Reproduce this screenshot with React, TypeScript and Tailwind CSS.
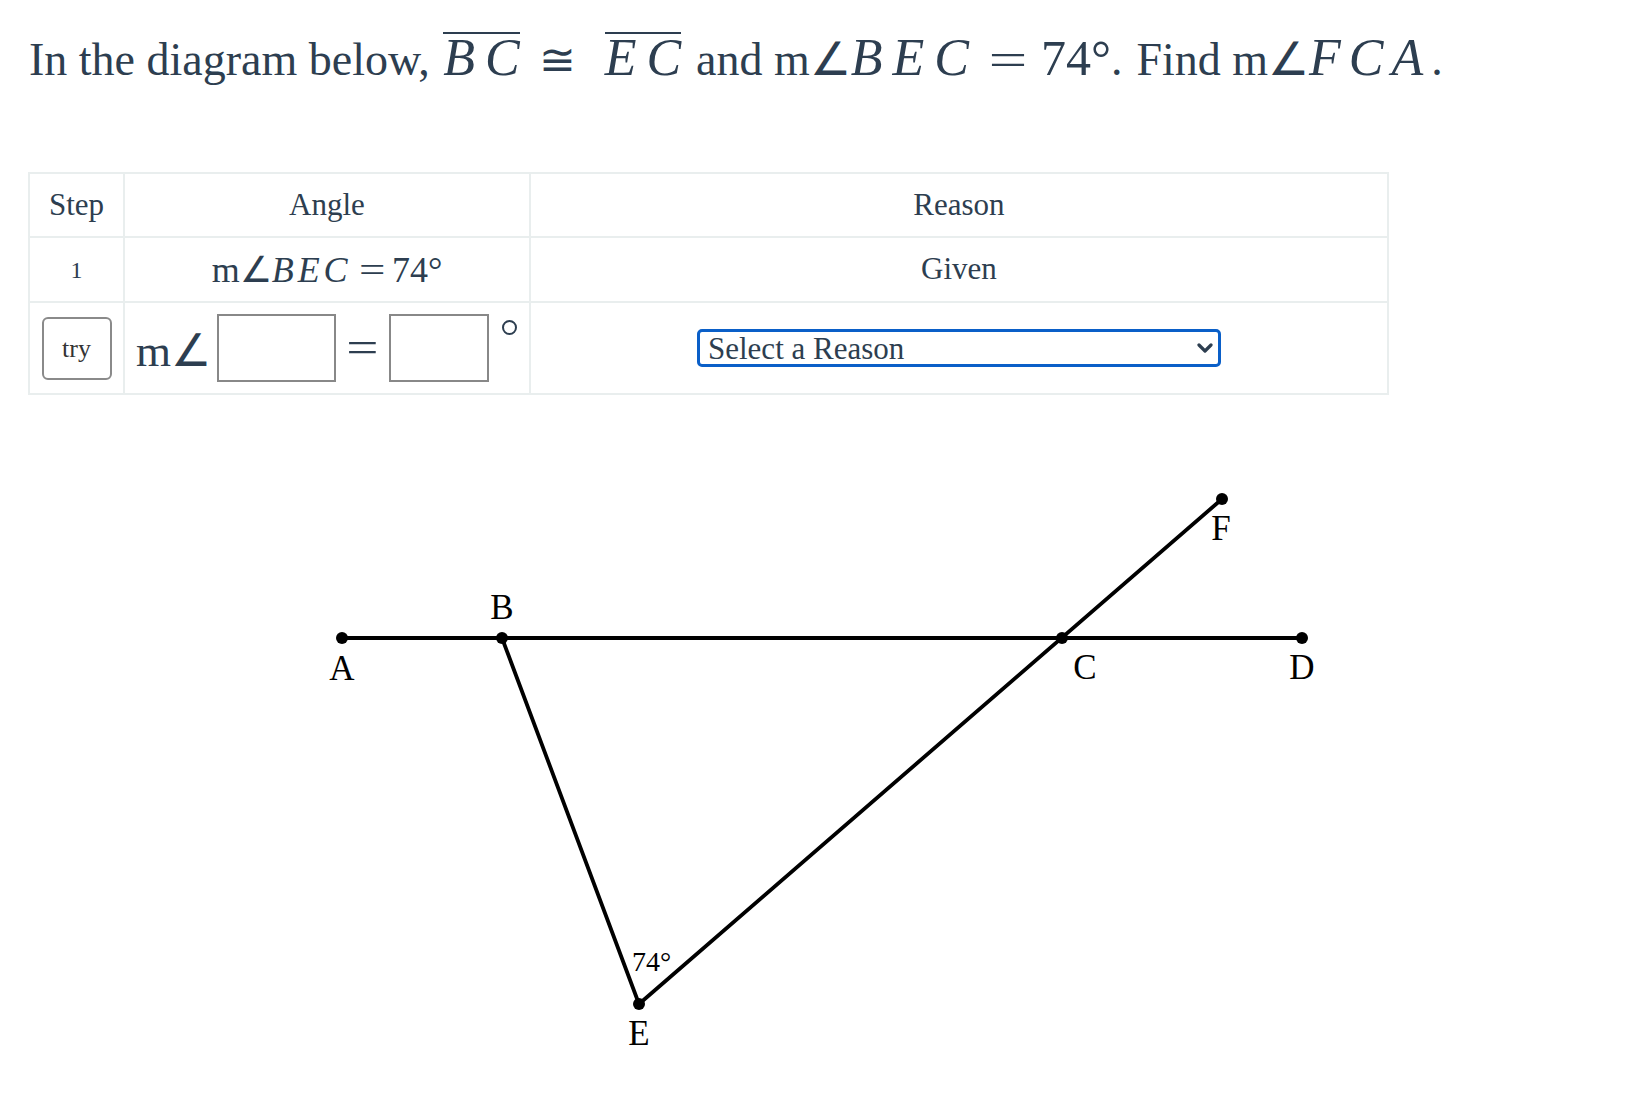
import React from 'react';

const ink = 'text-[#2d3e50]';

// points of the figure, in page pixels
const pts = {
  A: { x: 342, y: 638 },
  B: { x: 502, y: 638 },
  C: { x: 1062, y: 638 },
  D: { x: 1302, y: 638 },
  E: { x: 639, y: 1004 },
  F: { x: 1222, y: 499 },
};

const labels = [
  { t: 'A', x: 342, y: 680 },
  { t: 'B', x: 502, y: 619 },
  { t: 'C', x: 1085, y: 679 },
  { t: 'D', x: 1302, y: 679 },
  { t: 'E', x: 639, y: 1045 },
  { t: 'F', x: 1221, y: 540 },
];

const Diagram: React.FC = () => (
  <svg width={1634} height={700} viewBox="0 400 1634 700" className="block mt-[5px]">
    <g stroke="#000" strokeWidth={3.8} strokeLinecap="round">
      <line x1={pts.A.x} y1={pts.A.y} x2={pts.D.x} y2={pts.D.y} />
      <line x1={pts.B.x} y1={pts.B.y} x2={pts.E.x} y2={pts.E.y} />
      <line x1={pts.E.x} y1={pts.E.y} x2={pts.F.x} y2={pts.F.y} />
    </g>
    {Object.values(pts).map((p, i) => (
      <circle key={i} cx={p.x} cy={p.y} r={6} fill="#000" />
    ))}
    <g fontFamily="'Liberation Serif', serif" fontSize={35} fill="#000" textAnchor="middle">
      {labels.map((l) => (
        <text key={l.t} x={l.x} y={l.y}>
          {l.t}
        </text>
      ))}
    </g>
    <text x={632} y={971} fontFamily="'Liberation Serif', serif" fontSize={28} fill="#000">
      74°
    </text>
  </svg>
);

// segment name with a bar over it
const Seg: React.FC<{ a: string; b: string }> = ({ a, b }) => (
  <span className="inline-block italic text-[52px] leading-[47px] border-t-2 border-[#2d3e50]">
    <span className="mr-[10px]">{a}</span>
    {b}
  </span>
);

export default function App() {
  return (
    <div className={`min-h-screen bg-white font-['Liberation_Serif',serif] ${ink}`}>
      {/* Question */}
      <h1 className="pl-[29px] pt-[32px] text-[46px] leading-none whitespace-nowrap font-normal">
        In the diagram below,{' '}
        <span className="ml-[2px]">
          <Seg a="B" b="C" />
        </span>
        <span className="mx-[19px] text-[44px]">≅</span>
        <span className="ml-[10px]">
          <Seg a="E" b="C" />
        </span>
        <span className="ml-[15px]">and m∠</span>
        <span className="italic text-[52px] tracking-[10px]">BEC</span>
        <span className="inline-block ml-[16px] mr-[20px] scale-x-[1.5]">=</span>
        <span className="text-[50px]">74°</span>
        <span>.</span>
        <span className="ml-[14px]">Find m∠</span>
        <span className="italic text-[52px] tracking-[8px]">FCA</span>
        <span>.</span>
      </h1>

      {/* Proof table */}
      <table className="ml-[28px] mt-[88px] border-collapse table-fixed w-[1359px]">
        <colgroup>
          <col className="w-[95px]" />
          <col className="w-[406px]" />
          <col className="w-[858px]" />
        </colgroup>
        <thead>
          <tr className="h-[64px] text-[31px]">
            <th className="border-2 border-[#e9eeee] font-normal">Step</th>
            <th className="border-2 border-[#e9eeee] font-normal">Angle</th>
            <th className="border-2 border-[#e9eeee] font-normal">Reason</th>
          </tr>
        </thead>
        <tbody>
          <tr className="h-[65px]">
            <td className="border-2 border-[#e9eeee] text-center text-[24px]">1</td>
            <td className="border-2 border-[#e9eeee] text-center text-[36px]">
              m∠<span className="italic tracking-[4px]">BEC</span>
              <span className="inline-block mx-[10px] scale-x-[1.3]">=</span>74°
            </td>
            <td className="border-2 border-[#e9eeee] text-center text-[31px]">Given</td>
          </tr>
          <tr className="h-[92px]">
            <td className="border-2 border-[#e9eeee] text-center">
              <button className="w-[70px] h-[63px] border-2 border-[#8a8a8a] rounded-[6px] bg-white text-[26px] text-[#333]">
                try
              </button>
            </td>
            <td className="border-2 border-[#e9eeee] pl-[11px]">
              <div className="flex items-center">
                <span className="text-[45px] leading-none mt-[6px]">m∠</span>
                <div className="ml-[6px] w-[119px] h-[68px] border-2 border-[#888] bg-white" />
                <span className="inline-block mx-[14px] text-[44px] leading-none scale-x-[1.3]">=</span>
                <div className="w-[100px] h-[68px] border-2 border-[#888] bg-white" />
                <span className="ml-[13px] self-start mt-[6px] w-[15px] h-[15px] rounded-full border-2 border-[#2d3e50]" />
              </div>
            </td>
            <td className="border-2 border-[#e9eeee]">
              <div className="relative mx-auto w-[524px]">
                <select
                  defaultValue=""
                  className="appearance-none w-full h-[38px] border-[3px] border-[#0a5fc8] rounded-[5px] bg-white pl-[8px] text-[31px] leading-none text-[#2d3e50] font-['Liberation_Serif',serif]"
                >
                  <option value="">Select a Reason</option>
                  <option>Vertical angles are congruent</option>
                  <option>Base angles of an isosceles triangle are congruent</option>
                  <option>Angles in a triangle sum to 180°</option>
                </select>
                <svg
                  className="absolute right-[8px] top-1/2 -translate-y-1/2 pointer-events-none"
                  width="16"
                  height="12"
                  viewBox="0 0 16 12"
                >
                  <path d="M2 3 L8 9 L14 3" fill="none" stroke="#2d3e50" strokeWidth="3.2" strokeLinecap="round" strokeLinejoin="round" />
                </svg>
              </div>
            </td>
          </tr>
        </tbody>
      </table>

      <Diagram />
    </div>
  );
}
